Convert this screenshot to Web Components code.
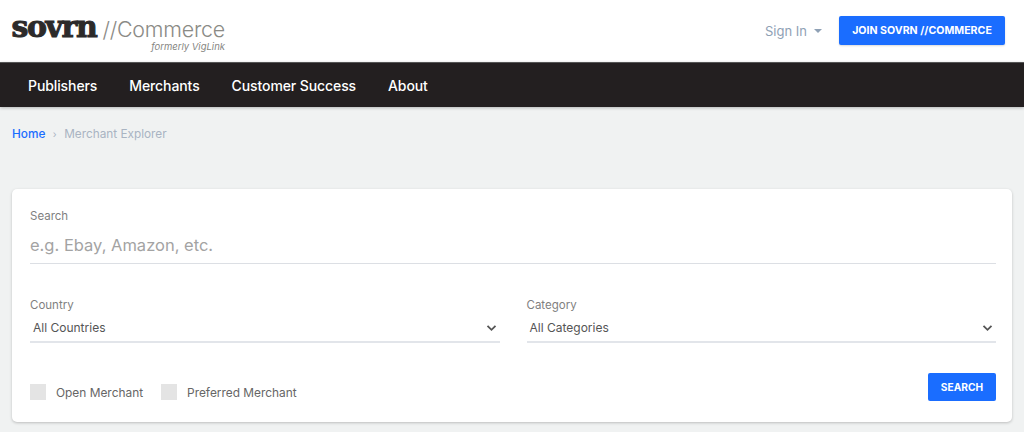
<!DOCTYPE html>
<html lang="en">
<head>
<meta charset="utf-8">
<title>Merchant Explorer</title>
<style>
  html, body { margin: 0; height: 432px; overflow: hidden; background: #f0f2f2; font-family: Inter, "Liberation Sans", sans-serif; }
</style>
</head>
<body>
<site-header></site-header>
<main-nav>
  <a href="#">Publishers</a>
  <a href="#">Merchants</a>
  <a href="#">Customer Success</a>
  <a href="#">About</a>
</main-nav>
<bread-crumbs current="Merchant Explorer"></bread-crumbs>
<search-card>
  <search-field slot="search" label="Search" placeholder="e.g. Ebay, Amazon, etc."></search-field>
  <select-field slot="filters" label="Country" value="All Countries"></select-field>
  <select-field slot="filters" label="Category" value="All Categories"></select-field>
  <check-box slot="checks" label="Open Merchant"></check-box>
  <check-box slot="checks" label="Preferred Merchant"></check-box>
</search-card>

<script>
const FONT = `Inter, "Liberation Sans", sans-serif`;

// small helper so every element below stays short
function shadow(el, html) {
  el.attachShadow({ mode: 'open' }).innerHTML = html;
}

class SiteHeader extends HTMLElement {
  constructor() {
    super();
    shadow(this, `
      <style>
        :host { display: flex; justify-content: space-between; align-items: flex-start; height: 62px; background: #fff; box-sizing: border-box; padding: 0 19px 0 12px; font-family: ${FONT}; }
        .logo { display: flex; flex-direction: column; align-items: flex-end; padding-top: 14px; width: 213px; }
        .top { display: flex; align-items: baseline; gap: 6px; height: 26px; line-height: 26px; white-space: nowrap; }
        .sovrn { font: 700 30px/26px "DejaVu Serif", serif; color: #2c2a2a; -webkit-text-stroke: 1px #2c2a2a; letter-spacing: -1.4px; }
        .commerce { font: 300 21.4px/26px Inter, sans-serif; color: #8b8b86; letter-spacing: -.2px; }
        .formerly { font: italic 400 9.5px/14px Inter, sans-serif; color: #85857f; }
        .right { display: flex; align-items: center; height: 29px; margin-top: 16px; }
        .sign { font-size: 13px; color: #8fa1b5; }
        .caret { width: 0; height: 0; border: 4.5px solid transparent; border-top: 4.5px solid #8fa1b5; border-bottom: 0; margin: 0 17px 0 7px; }
        .join { width: 166px; height: 29px; background: #1a6dff; color: #fff; border-radius: 2px; font-size: 10.6px; font-weight: 700; display: flex; align-items: center; justify-content: center; box-shadow: 0 1px 2px rgba(0,0,0,.15); }
      </style>
      <div class="logo">
        <div class="top"><span class="sovrn">sovrn</span><span class="commerce">//Commerce</span></div>
        <div class="formerly">formerly VigLink</div>
      </div>
      <div class="right">
        <span class="sign">Sign In</span><span class="caret"></span>
        <span class="join">JOIN SOVRN //COMMERCE</span>
      </div>`);
  }
}

class MainNav extends HTMLElement {
  constructor() {
    super();
    shadow(this, `
      <style>
        :host { display: flex; gap: 32px; align-items: center; height: 45px; padding-left: 28px; background: #231f20; border-top: 1px solid #555; box-sizing: border-box; box-shadow: 0 1px 3px rgba(0,0,0,.25); position: relative; font-family: ${FONT}; }
        ::slotted(a) { color: #fff; text-decoration: none; font-size: 14px; font-weight: 500; letter-spacing: -.1px; }
      </style>
      <slot></slot>`);
  }
}

class BreadCrumbs extends HTMLElement {
  constructor() {
    super();
    shadow(this, `
      <style>
        :host { display: flex; align-items: center; height: 54px; padding: 0 12px; font-family: ${FONT}; font-size: 11.8px; margin-bottom: 28px; }
        .home { color: #1a6dff; font-weight: 500; }
        .sep { color: #a9b4c2; margin: 0 7.5px; font-size: 10px; }
        .cur { color: #a9b4c2; }
      </style>
      <span class="home">Home</span><span class="sep">›</span><span class="cur">${this.getAttribute('current')}</span>`);
  }
}

class SearchCard extends HTMLElement {
  constructor() {
    super();
    shadow(this, `
      <style>
        :host { display: block; margin: 0 12px; height: 233px; box-sizing: border-box; padding: 19px 16px 0 18px; background: #fff; border-radius: 5px; box-shadow: 0 1px 3px rgba(0,0,0,.22); font-family: ${FONT}; }
        .filters { display: grid; grid-template-columns: 1fr 1fr; gap: 27px; margin-top: 33px; }
        .bottom { display: flex; justify-content: space-between; align-items: flex-start; margin-top: 30px; }
        .checks { display: flex; gap: 18px; padding-top: 11px; }
        .go { width: 68px; height: 28px; display: flex; align-items: center; justify-content: center; background: #1a6dff; color: #fff; border-radius: 2px; font-size: 10.2px; font-weight: 700; }
      </style>
      <slot name="search"></slot>
      <div class="filters"><slot name="filters"></slot></div>
      <div class="bottom">
        <div class="checks"><slot name="checks"></slot></div>
        <span class="go">SEARCH</span>
      </div>`);
  }
}

class SearchField extends HTMLElement {
  constructor() {
    super();
    shadow(this, `
      <style>
        :host { display: block; }
        .label { font-size: 11.5px; line-height: 16px; color: #7f7f7f; }
        .input { font-size: 16.5px; line-height: 24px; padding: 9px 0 6px; color: #a3a3a3; border-bottom: 1px solid #dcdfe4; }
      </style>
      <div class="label">${this.getAttribute('label')}</div>
      <div class="input">${this.getAttribute('placeholder')}</div>`);
  }
}

class SelectField extends HTMLElement {
  constructor() {
    super();
    shadow(this, `
      <style>
        :host { display: block; }
        .label { font-size: 11.5px; line-height: 16px; color: #7f7f7f; }
        .row { display: flex; justify-content: space-between; align-items: center; height: 30px; box-sizing: border-box; padding: 1px 3px 0 3px; border-bottom: 2px solid #e2e5ea; font-size: 12px; color: #555; }
        svg { width: 11px; height: 8px; }
      </style>
      <div class="label">${this.getAttribute('label')}</div>
      <div class="row"><span>${this.getAttribute('value')}</span>
        <svg viewBox="0 0 11 8"><path d="M1.5 1.8 5.5 5.8 9.5 1.8" fill="none" stroke="#555" stroke-width="1.8"/></svg>
      </div>`);
  }
}

class CheckBox extends HTMLElement {
  constructor() {
    super();
    shadow(this, `
      <style>
        :host { display: flex; align-items: center; gap: 10px; font-size: 11.9px; color: #666; }
        .box { width: 16px; height: 16px; background: #e4e4e4; }
      </style>
      <span class="box"></span><span>${this.getAttribute('label')}</span>`);
  }
}

customElements.define('site-header', SiteHeader);
customElements.define('main-nav', MainNav);
customElements.define('bread-crumbs', BreadCrumbs);
customElements.define('search-card', SearchCard);
customElements.define('search-field', SearchField);
customElements.define('select-field', SelectField);
customElements.define('check-box', CheckBox);
</script>
</body>
</html>
